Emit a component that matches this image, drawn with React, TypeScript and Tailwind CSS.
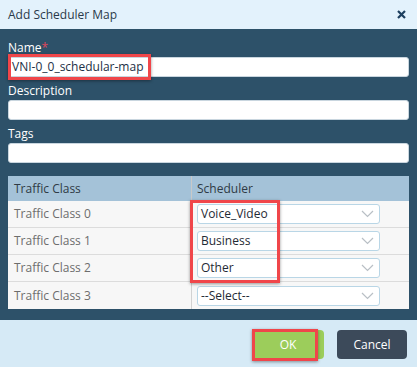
import React from "react";

const rows = [
  { name: "Traffic Class 0", value: "Voice_Video" },
  { name: "Traffic Class 1", value: "Business" },
  { name: "Traffic Class 2", value: "Other" },
  { name: "Traffic Class 3", value: "--Select--" },
];

function Field({ label, value, required }: { label: string; value?: string; required?: boolean }) {
  return (
    <div className="flex flex-col">
      <label className="mb-[1px] h-[16px] text-[12px] leading-[16px] text-white">
        {label}
        {required && <span className="text-[#e0455a]">*</span>}
      </label>
      <div className="flex h-[20px] items-center rounded-[3px] border border-[#c9d6df] bg-white px-[3px] text-[12px] text-[#1c2f45]">
        {value}
      </div>
    </div>
  );
}

function Chevron() {
  return (
    <svg width="13" height="8" viewBox="0 0 13 8" fill="none">
      <path d="M1 1l5.5 5.5L12 1" stroke="#b9bfc5" strokeWidth="1.2" />
    </svg>
  );
}

export default function App() {
  return (
    <div className="relative flex h-[367px] w-[417px] flex-col overflow-hidden font-['Open_Sans',sans-serif]">
      <div className="flex h-[29px] items-center justify-between bg-[#e3f2fc] pl-2 pr-[11px]">
        <span className="text-[12px] text-[#2b3a4a]">Add Scheduler Map</span>
        <svg width="9" height="9" viewBox="0 0 9 9">
          <path d="M1 1l7 7M8 1L1 8" stroke="#1d3f5f" strokeWidth="2.2" />
        </svg>
      </div>

      <div className="flex h-[291px] flex-col bg-[#2d5169] px-2 pt-[11px]">
        <div className="flex flex-col gap-[6px]">
          <Field label="Name" required value="VNI-0_0_schedular-map" />
          <Field label="Description" />
          <Field label="Tags" />
        </div>

        <div className="mt-[13px] bg-[#f7f7f7] text-[12px]">
          <div className="grid h-[25px] grid-cols-[184px_1fr] bg-[#a4c2d8] text-[#2f3a45]">
            <div className="flex items-center border-r border-[#c9c9c9] pl-[6px]">Traffic Class</div>
            <div className="flex items-center pl-[5px]">Scheduler</div>
          </div>
          {rows.map((r) => (
            <div key={r.name} className="grid h-[27px] grid-cols-[184px_1fr] border-b border-[#dcdcdc] last:border-b-0">
              <div className="flex items-center border-r border-[#d2d2d2] pl-[6px] text-[#6d6d6d]">{r.name}</div>
              <div className="flex items-center pl-[5px]">
                <div className="flex h-[20px] w-[183px] items-center justify-between rounded-[3px] border border-[#b9d6e6] bg-white pl-[3px] pr-[5px] text-[#1f2a35]">
                  <span>{r.value}</span>
                  <Chevron />
                </div>
              </div>
            </div>
          ))}
        </div>
      </div>

      <div className="flex flex-1 items-start justify-end gap-[13px] bg-[#d6eaf6] pr-[10px] pt-[10px]">
        <button className="h-[29px] w-[72px] rounded-[4px] bg-[#9ccd5b] text-[12px] text-white">OK</button>
        <button className="h-[29px] w-[70px] rounded-[4px] bg-[#3c4a5a] text-[12px] text-white">Cancel</button>
      </div>

      {/* annotation boxes */}
      <div className="pointer-events-none absolute left-[8px] top-[54px] h-[26px] w-[143px] border-[3px] border-[#f0464a] shadow-[0_1px_3px_rgba(0,0,0,0.4)]" />
      <div className="pointer-events-none absolute left-[190px] top-[200px] h-[83px] w-[90px] border-[3px] border-[#f0464a] shadow-[0_1px_3px_rgba(0,0,0,0.4)]" />
      <div className="pointer-events-none absolute left-[252px] top-[329px] h-[32px] w-[66px] border-[3px] border-[#f0464a] shadow-[0_1px_3px_rgba(0,0,0,0.4)]" />
    </div>
  );
}
